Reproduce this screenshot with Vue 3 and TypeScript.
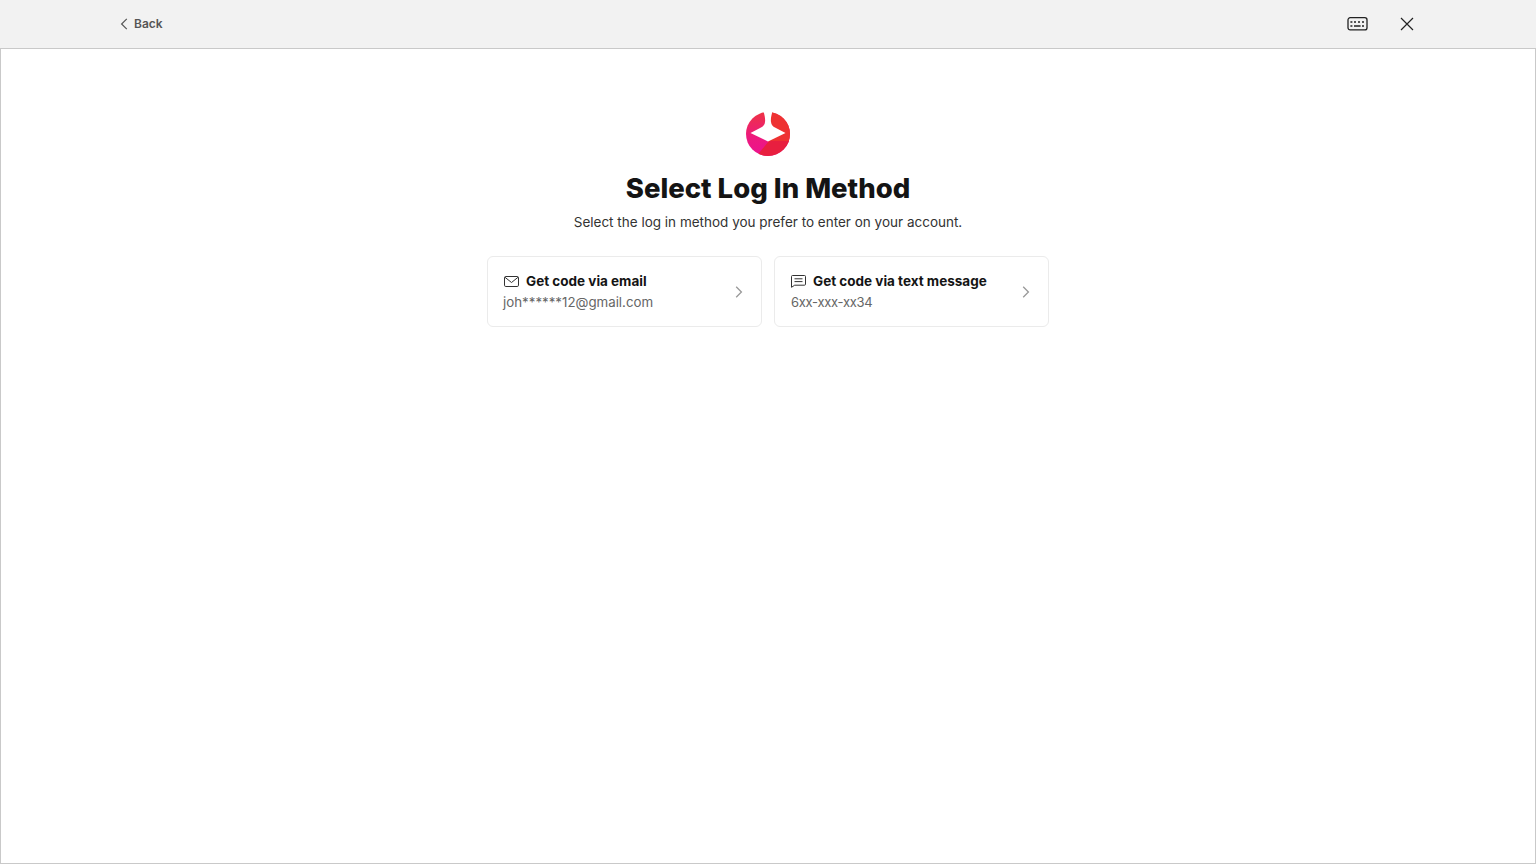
<script setup lang="ts">
interface Method { id: string; title: string; detail: string }
const methods: Method[] = [
  { id: 'email', title: 'Get code via email', detail: 'joh******12@gmail.com' },
  { id: 'sms', title: 'Get code via text message', detail: '6xx-xxx-xx34' },
]
</script>

<template>
  <div class="page">
    <header class="topbar">
      <button class="back" type="button">
        <svg width="8" height="12" viewBox="0 0 8 12" fill="none"><path d="M6.8 .8 1.6 6l5.2 5.2" stroke="#555" stroke-width="1.2"/></svg>
        <span>Back</span>
      </button>
      <div class="tools">
        <svg width="21" height="14" viewBox="0 0 21 14" fill="none">
          <rect x="1" y=".7" width="19" height="12.2" rx="2.2" stroke="#222" stroke-width="1.3"/>
          <path d="M3.4 5h2M7 5h2M11 5h2M15 5h2M3.4 9h2M7 9h6.6M15 9h2" stroke="#222" stroke-width="1.6"/>
        </svg>
        <svg width="14" height="14" viewBox="0 0 14 14" fill="none"><path d="M1 1l12 12M13 1 1 13" stroke="#222" stroke-width="1.2"/></svg>
      </div>
    </header>
    <main class="content">
      <svg class="logo" width="44" height="44" viewBox="0 0 44 44">
        <defs>
          <linearGradient id="leftFill" x1="0" y1="0" x2="0" y2="1">
            <stop offset="0" stop-color="#ee3344"/>
            <stop offset=".55" stop-color="#ed1a7c"/>
            <stop offset="1" stop-color="#ec1290"/>
          </linearGradient>
          <clipPath id="disc"><circle cx="22" cy="22" r="22"/></clipPath>
        </defs>
        <g clip-path="url(#disc)">
          <rect width="44" height="44" fill="url(#leftFill)"/>
          <rect x="22" width="22" height="30" fill="#ee3232"/>
          <path d="M23 29 10.5 44H44V29Z" fill="#e81f3f"/>
        </g>
        <path d="M17.500-1C18.500 3 19.500 7 19 10 18.700 13 17 14.500 15 15.500L4.500 21 22 29.500 39.500 21 29 15.500C27 14.500 25.300 13 25 10 24.500 7 25.500 3 26.500-1Z" fill="#fff"/>
      </svg>
      <h1>Select Log In Method</h1>
      <p class="sub">Select the log in method you prefer to enter on your account.</p>
      <div class="cards">
        <button v-for="m in methods" :key="m.id" class="card" type="button">
          <div class="text">
            <div class="title">
              <svg v-if="m.id === 'email'" width="15" height="11" viewBox="0 0 15 11" fill="none">
                <rect x=".5" y=".5" width="14" height="10" rx="1.300" stroke="#333"/>
                <path d="M1 1.300 7.500 6.500 14 1.300" stroke="#333"/>
              </svg>
              <svg v-else width="15" height="13" viewBox="0 0 15 13" fill="none">
                <path d="M1.500.5h12a1 1 0 0 1 1 1v7.700a1 1 0 0 1-1 1H3.700L.5 12.300V1.500a1 1 0 0 1 1-1Z" stroke="#333"/>
                <path d="M3.500 3.800h8M3.500 6.600h8" stroke="#333"/>
              </svg>
              <strong>{{ m.title }}</strong>
            </div>
            <div class="detail" :class="m.id">{{ m.detail }}</div>
          </div>
          <svg class="chev" width="8" height="12" viewBox="0 0 8 12" fill="none"><path d="M1.200.8 6.400 6l-5.200 5.200" stroke="#999" stroke-width="1.300"/></svg>
        </button>
      </div>
    </main>
  </div>
</template>

<style>
html, body { margin: 0; background: #fff; }
</style>

<style scoped>
.page {
  width: 1536px;
  height: 864px;
  box-sizing: border-box;
  display: flex;
  flex-direction: column;
  font-family: Inter, "Open Sans", sans-serif;
  color: #141414;
  overflow: hidden;
}
.topbar {
  height: 49px;
  flex: none;
  box-sizing: border-box;
  display: flex;
  align-items: center;
  justify-content: space-between;
  padding: 0 122px 1px 120px;
  background: #f2f2f2;
  border-bottom: 1px solid #c9c9c9;
}
.back {
  display: flex;
  align-items: center;
  gap: 6px;
  padding: 0;
  border: 0;
  background: none;
  font: 600 12px Inter, sans-serif;
  color: #555;
}
.tools {
  display: flex;
  align-items: center;
  gap: 32px;
}
.content {
  flex: 1;
  box-sizing: border-box;
  border: 1px solid #c9c9c9;
  border-top: 0;
  display: flex;
  flex-direction: column;
  align-items: center;
  padding-top: 63px;
}
.logo { display: block; }
h1 {
  margin: 13px 0 0;
  font-size: 27.500px;
  line-height: 38px;
  font-weight: 800;
  color: #141414;
}
.sub {
  margin: 5px 0 0;
  font-size: 13.500px;
  line-height: 20px;
  color: #333;
}
.cards {
  margin-top: 24px;
  display: flex;
  gap: 12px;
}
.card {
  width: 275px;
  height: 71px;
  box-sizing: border-box;
  display: flex;
  align-items: center;
  justify-content: space-between;
  padding: 0 18px 0 15px;
  background: #fff;
  border: 1px solid #ebebeb;
  border-radius: 6px;
  font-family: inherit;
  text-align: left;
}
.text {
  display: flex;
  flex-direction: column;
  gap: 1px;
}
.title {
  display: flex;
  align-items: center;
  gap: 7px;
  height: 20px;
  padding-left: 1px;
}
.title strong {
  font-size: 13.500px;
  font-weight: 700;
  color: #141414;
}
.detail {
  font-size: 13.300px;
  line-height: 20px;
  color: #666;
}
.detail.sms {
  padding-left: 1px;
  font-size: 13px;
  letter-spacing: -0.300px;
}
</style>
